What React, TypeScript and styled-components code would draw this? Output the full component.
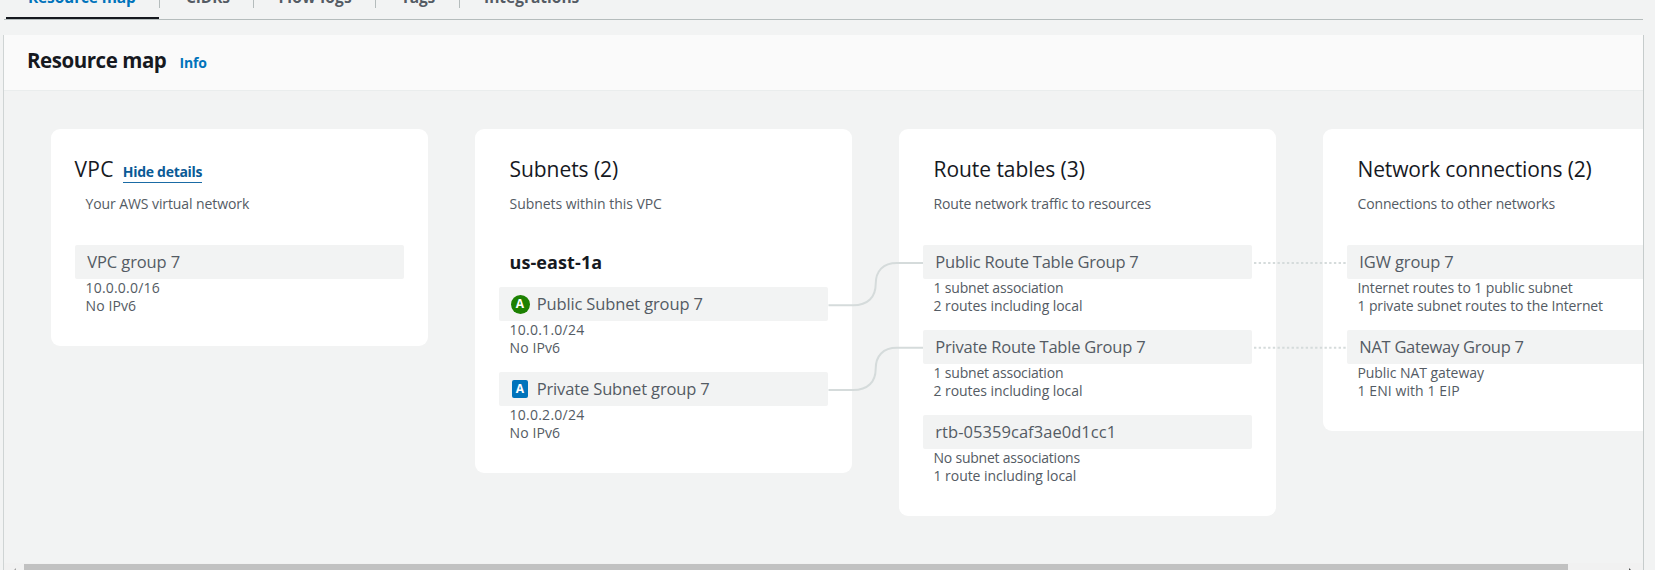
import React from 'react';
import styled, { createGlobalStyle } from 'styled-components';

const GlobalStyle = createGlobalStyle`
  *, *::before, *::after { box-sizing: border-box; }
  html, body { margin: 0; height: 570px; overflow: hidden; background: #f2f3f3; }
  body { font-family: 'Open Sans', 'Noto Sans', sans-serif; font-size: 14px; line-height: 18px; color: #545b64; }
`;

const Page = styled.main`
  display: flex;
  flex-direction: column;
  width: 1655px;
  height: 570px;
  padding: 0 11px 0 3px;
  overflow: hidden;
  background: #f2f3f3;
`;

const Tabs = styled.nav`
  display: flex;
  flex: none;
  height: 20px;
  margin: 0 1px;
  border-bottom: 1px solid #b5bcbc;
`;

const Tab = styled.div<{ $width: number; $pad: number; $track: number; $active?: boolean }>`
  display: flex;
  align-items: flex-start;
  width: ${p => p.$width}px;
  height: 19px;
  margin-left: ${p => (p.$active ? 2 : 0)}px;
  padding-left: ${p => p.$pad}px;
  border-bottom: ${p => (p.$active ? '2px solid #16191f' : '0')};
  color: ${p => (p.$active ? '#0073bb' : '#545b64')};
  font-size: 15.5px;
  font-weight: 700;
  line-height: 20px;
  letter-spacing: ${p => p.$track}px;
  white-space: nowrap;
`;

const TabLabel = styled.span`
  margin-top: -13px;
`;

const TabDivider = styled.i`
  width: 1px;
  height: 8px;
  margin-right: -1px;
  background: #b5bcbc;
`;

const Panel = styled.section`
  display: flex;
  flex: none;
  flex-direction: column;
  height: 536px;
  margin-top: 15px;
  border-left: 1px solid #cfd4d4;
  border-right: 1px solid #c6cccc;
`;

const PanelHeader = styled.header`
  display: flex;
  flex: none;
  align-items: baseline;
  gap: 13px;
  height: 56px;
  padding: 11px 0 0 23px;
  background: #fafafa;
  border-bottom: 1px solid #eaeded;
`;

const PanelTitle = styled.h2`
  margin: 0;
  color: #16191f;
  font-size: 20.5px;
  font-weight: 700;
  line-height: 28px;
  letter-spacing: -0.45px;
`;

const InfoLink = styled.a`
  color: #0073bb;
  font-size: 14px;
  font-weight: 700;
  letter-spacing: -0.1px;
`;

const MapArea = styled.div`
  position: relative;
  display: flex;
  flex: none;
  align-items: flex-start;
  gap: 47px;
  height: 472px;
  padding: 38px 0 0 47px;
  overflow: hidden;
`;

const Card = styled.article`
  flex: none;
  width: 377px;
  padding: 26px 24px 31px 23.5px;
  border-radius: 9px;
  background: #fff;
`;

const CardTitle = styled.h3<{ $track: number; $flush?: boolean }>`
  display: flex;
  align-items: baseline;
  margin: 0 0 12px ${p => (p.$flush ? 0 : 11)}px;
  color: #16191f;
  font-size: 21px;
  font-weight: 400;
  line-height: 28px;
  letter-spacing: ${p => p.$track}px;
  white-space: nowrap;
`;

const DetailsLink = styled.a`
  height: 25px;
  margin: 0 0 -6px 9px;
  border-bottom: 1px solid #1a6ba5;
  color: #0a5a96;
  font-size: 14px;
  font-weight: 700;
  line-height: 28px;
  letter-spacing: -0.28px;
`;

const Caption = styled.p<{ $track: number }>`
  margin: 0 0 32px 11px;
  font-size: 14px;
  line-height: 18px;
  letter-spacing: ${p => p.$track}px;
  white-space: nowrap;
`;

const Zone = styled.h4`
  margin: 0 0 13px 11px;
  padding-top: 5px;
  color: #16191f;
  font-size: 18px;
  font-weight: 700;
  line-height: 24px;
  letter-spacing: 0.1px;
`;

const Items = styled.div`
  display: flex;
  flex-direction: column;
  gap: 14.8px;
`;

const ItemName = styled.div<{ $track: number }>`
  display: flex;
  align-items: center;
  height: 34px;
  padding-left: 12.8px;
  border-radius: 2px;
  background: #f2f3f3;
  font-size: 16.5px;
  line-height: 33.4px;
  letter-spacing: ${p => p.$track}px;
  white-space: nowrap;
`;

const ItemLine = styled.div<{ $track: number }>`
  height: 18px;
  padding-left: 11px;
  letter-spacing: ${p => p.$track}px;
  white-space: nowrap;
`;

const Badge = styled.span<{ $kind: 'public' | 'private' }>`
  display: flex;
  align-items: center;
  justify-content: center;
  width: ${p => (p.$kind === 'public' ? 19 : 16)}px;
  height: ${p => (p.$kind === 'public' ? 19 : 18.5)}px;
  margin: 0 ${p => (p.$kind === 'public' ? '7.2px 0 -0.8px' : '8.7px 0 0.7px')};
  border-radius: ${p => (p.$kind === 'public' ? '50%' : '2px')};
  background: ${p => (p.$kind === 'public' ? '#1d8102' : '#0073bb')};
  color: #fff;
  font-size: 12px;
  font-weight: 700;
  line-height: 18px;
  letter-spacing: 0;
`;

const Connectors = styled.svg`
  position: absolute;
  left: 0;
  top: 0;
  pointer-events: none;
`;

const Scrollbar = styled.div`
  display: flex;
  flex: none;
  height: 17px;
  padding-top: 1px;
  background: #f1f1f1;
`;

const ScrollButton = styled.svg`
  flex: none;
`;

const ScrollThumb = styled.div`
  width: 1544px;
  height: 16px;
  margin-right: 54px;
  background: #c1c1c1;
`;

type Line = [text: string, track: number];
type Item = { name: string; track: number; badge?: 'public' | 'private'; lines: Line[] };
type Column = {
  title: string;
  track: number;
  details?: boolean;
  caption: Line;
  zone?: string;
  items: Item[];
};

const tabs = [
  { label: 'Resource map', width: 153, pad: 22, track: -0.15, active: true },
  { label: 'CIDRs', width: 94, pad: 27, track: -0.1 },
  { label: 'Flow logs', width: 122, pad: 25.5, track: 0.3 },
  { label: 'Tags', width: 84, pad: 26, track: -0.2 },
  { label: 'Integrations', width: 140, pad: 25, track: 0 },
];

const columns: Column[] = [
  {
    title: 'VPC',
    track: 0.27,
    details: true,
    caption: ['Your AWS virtual network', -0.09],
    items: [{ name: 'VPC group 7', track: -0.11, lines: [['10.0.0.0/16', 0.2], ['No IPv6', 0.11]] }],
  },
  {
    title: 'Subnets (2)',
    track: -0.05,
    caption: ['Subnets within this VPC', -0.04],
    zone: 'us-east-1a',
    items: [
      { name: 'Public Subnet group 7', track: -0.14, badge: 'public', lines: [['10.0.1.0/24', 0.25], ['No IPv6', 0.11]] },
      { name: 'Private Subnet group 7', track: -0.14, badge: 'private', lines: [['10.0.2.0/24', 0.25], ['No IPv6', 0.11]] },
    ],
  },
  {
    title: 'Route tables (3)',
    track: -0.05,
    caption: ['Route network traffic to resources', -0.15],
    items: [
      { name: 'Public Route Table Group 7', track: -0.22, lines: [['1 subnet association', -0.19], ['2 routes including local', -0.06]] },
      { name: 'Private Route Table Group 7', track: -0.22, lines: [['1 subnet association', -0.19], ['2 routes including local', -0.06]] },
      { name: 'rtb-05359caf3ae0d1cc1', track: 0.05, lines: [['No subnet associations', -0.22], ['1 route including local', -0.04]] },
    ],
  },
  {
    title: 'Network connections (2)',
    track: -0.15,
    caption: ['Connections to other networks', -0.14],
    items: [
      { name: 'IGW group 7', track: -0.12, lines: [['Internet routes to 1 public subnet', -0.12], ['1 private subnet routes to the Internet', -0.12]] },
      { name: 'NAT Gateway Group 7', track: -0.28, lines: [['Public NAT gateway', -0.07], ['1 ENI with 1 EIP', 0.08]] },
    ],
  },
];

function ResourceColumn({ column }: { column: Column }) {
  return (
    <Card>
      <CardTitle $track={column.track} $flush={column.details}>
        {column.title}
        {column.details && <DetailsLink>Hide details</DetailsLink>}
      </CardTitle>
      <Caption $track={column.caption[1]}>{column.caption[0]}</Caption>
      {column.zone && <Zone>{column.zone}</Zone>}
      <Items>
        {column.items.map(item => (
          <div key={item.name}>
            <ItemName $track={item.track}>
              {item.badge && <Badge $kind={item.badge}>A</Badge>}
              {item.name}
            </ItemName>
            {item.lines.map(([text, track]) => (
              <ItemLine key={text} $track={track}>{text}</ItemLine>
            ))}
          </div>
        ))}
      </Items>
    </Card>
  );
}

export default function App() {
  return (
    <>
      <GlobalStyle />
      <Page>
        <Tabs>
          {tabs.map((tab, i) => (
            <React.Fragment key={tab.label}>
              <Tab $width={tab.width} $pad={tab.pad} $track={tab.track} $active={tab.active}>
                <TabLabel>{tab.label}</TabLabel>
              </Tab>
              {i < tabs.length - 1 && <TabDivider />}
            </React.Fragment>
          ))}
        </Tabs>
        <Panel>
          <PanelHeader>
            <PanelTitle>Resource map</PanelTitle>
            <InfoLink>Info</InfoLink>
          </PanelHeader>
          <MapArea>
            {columns.map(column => (
              <ResourceColumn key={column.title} column={column} />
            ))}
            <Connectors width="1639" height="472" fill="none" stroke="#d5dbdb" strokeWidth="2">
              <path d="M824.5 214.3H849C864 214.3 871.7 206 871.7 193C871.7 180 879 172 893 172H919" />
              <path d="M824.5 299.1H849C864 299.1 871.7 290.8 871.7 277.8C871.7 264.8 879 256.8 893 256.8H919" />
              <path d="M1250 172H1343M1250 256.8H1343" strokeDasharray="2.35 2.35" />
            </Connectors>
          </MapArea>
          <Scrollbar>
            <ScrollButton width="20" height="16"><path d="M12 4v8l-4-4z" fill="#a3a3a3" /></ScrollButton>
            <ScrollThumb />
            <ScrollButton width="20" height="16"><path d="M7 4v8l4-4z" fill="#505050" /></ScrollButton>
          </Scrollbar>
        </Panel>
      </Page>
    </>
  );
}
